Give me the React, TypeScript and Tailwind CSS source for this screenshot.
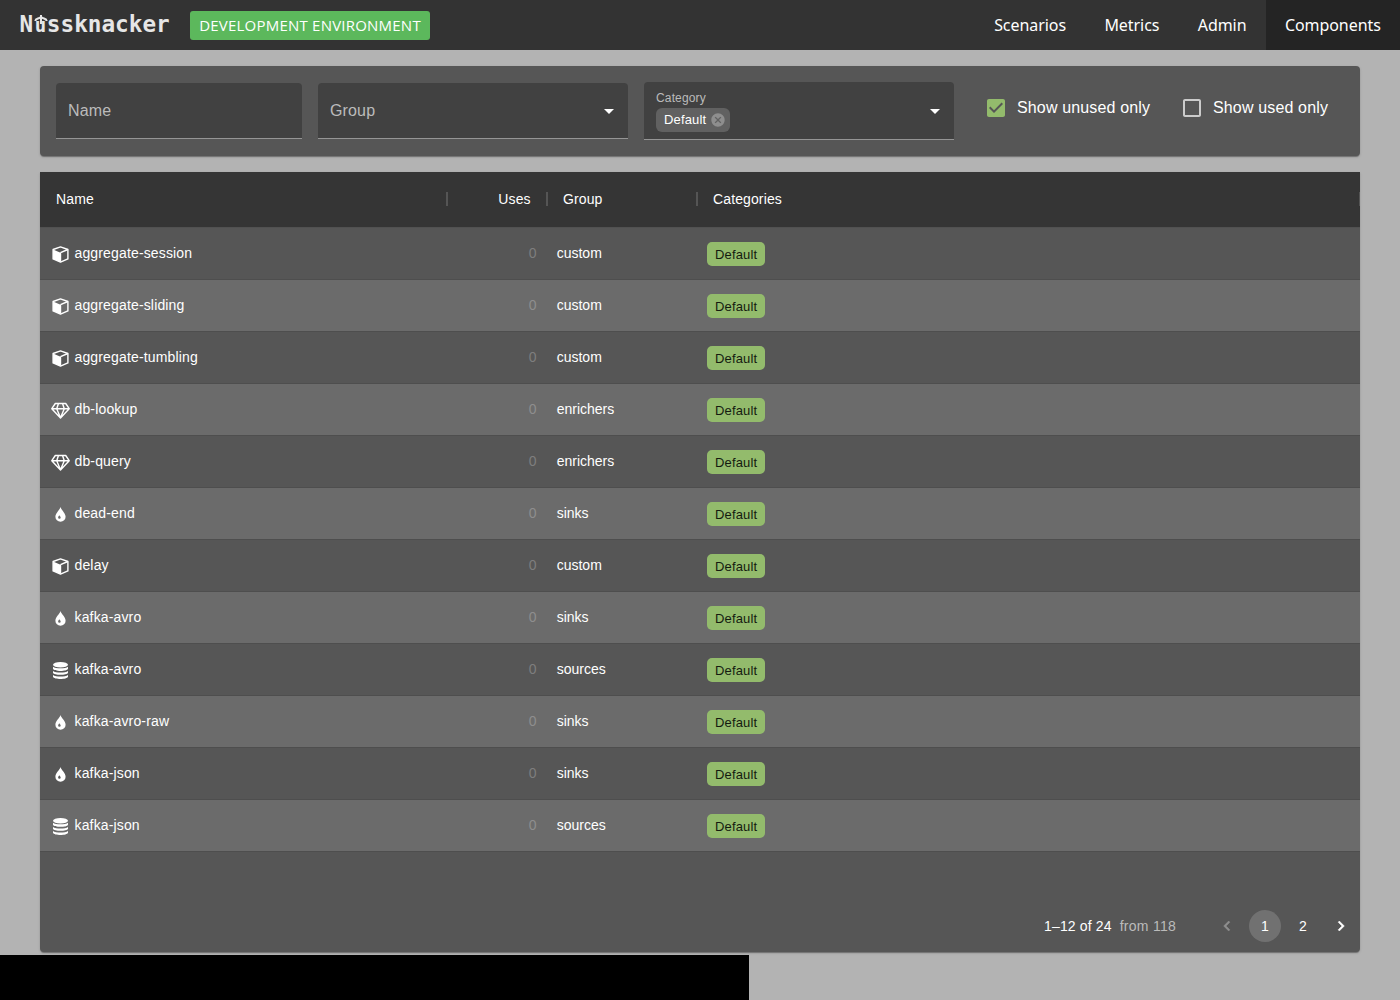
import React from "react";

type Kind = "custom" | "enrichers" | "sinks" | "sources";

const rows: { name: string; group: Kind }[] = [
  { name: "aggregate-session", group: "custom" },
  { name: "aggregate-sliding", group: "custom" },
  { name: "aggregate-tumbling", group: "custom" },
  { name: "db-lookup", group: "enrichers" },
  { name: "db-query", group: "enrichers" },
  { name: "dead-end", group: "sinks" },
  { name: "delay", group: "custom" },
  { name: "kafka-avro", group: "sinks" },
  { name: "kafka-avro", group: "sources" },
  { name: "kafka-avro-raw", group: "sinks" },
  { name: "kafka-json", group: "sinks" },
  { name: "kafka-json", group: "sources" },
];

function KindIcon({ kind }: { kind: Kind }) {
  return (
    <svg width="20" height="20" viewBox="-0.5 -0.5 20 20" className="shrink-0" fill="white">
      {kind === "custom" && (
        <>
          <path d="M10 2.400 17.400 5V14.400L10 17.600 2.600 14.400V5Z" fill="none" stroke="white" strokeWidth="1.400" strokeLinejoin="round" />
          <path d="M2.600 5 10 8.200V17.600L2.600 14.400Z" />
          <path d="M10 8.200 17.400 5M10 8.200V17" fill="none" stroke="white" strokeWidth="1.400" />
        </>
      )}
      {kind === "enrichers" && (
        <path
          d="M4.800 3H15.200L18.700 8.200 10 17.600 1.300 8.200ZM1.300 8.200H18.700M8 3 6.200 8.200 10 17.200 13.800 8.200 12 3"
          fill="none"
          stroke="white"
          strokeWidth="1.400"
          strokeLinejoin="round"
        />
      )}
      {kind === "sinks" && (
        <path
          fillRule="evenodd"
          d="M10 2.600C10.800 5.600 15.100 8.700 15.100 12.200A5.100 5.100 0 0 1 4.900 12.200C4.900 8.700 9.200 5.600 10 2.600ZM8.800 10.800C8.500 11.600 7.600 12.200 7.600 13A1.300 1.300 0 0 0 10.200 13C10.200 12.200 9.100 11.600 8.800 10.800Z"
        />
      )}
      {kind === "sources" && (
        <>
          <ellipse cx="10" cy="4.200" rx="7.500" ry="2.800" />
          <path d="M2.500 6.300C5 8.300 15 8.300 17.500 6.300V8.200C16.500 11.100 3.500 11.100 2.500 8.200Z" />
          <path d="M2.500 10.400C5 12.400 15 12.400 17.500 10.400V12.200C16.500 15 3.500 15 2.500 12.200Z" />
          <path d="M2.500 14.400C5 16.400 15 16.400 17.500 14.400V16.200C16.500 19.200 3.500 19.200 2.500 16.200Z" />
        </>
      )}
    </svg>
  );
}

function Caret() {
  return (
    <svg width="24" height="24" viewBox="0 0 24 24" fill="white" className="shrink-0">
      <path d="m7 10 5 5 5-5z" />
    </svg>
  );
}

function Logo() {
  return (
    <div className="relative -mt-[3px] ml-[19.5px] w-[150px] whitespace-nowrap font-['DejaVu_Sans_Mono',monospace] text-[22.7px] font-bold leading-[30px] text-[#e6e6e6]">
      N<span className="inline-block w-[13.67px] pl-[1.500px] text-[19px] leading-none">u</span>ssknacker
      <svg width="14" height="10" viewBox="0 0 14 10" className="absolute left-[14px] top-[6px]" fill="none" stroke="#e6e6e6">
        <path d="M7 0V9" strokeWidth="2" />
        <path d="M1.300 6C1.500 3 5 4.200 7 1.800C9 4.200 12.500 3 12.700 6" strokeWidth="2" />
      </svg>
    </div>
  );
}

function HeaderCell({ className, label }: { className: string; label: string }) {
  return (
    <div className={"flex h-full items-center " + className}>
      <span className="flex-1 pl-4 pr-[15.3px]">{label}</span>
      <span className="-mr-px mb-[2px] h-[14px] w-[2px] bg-[#555555]" />
    </div>
  );
}

export default function App() {
  return (
    <div className="flex h-[1000px] w-[1400px] flex-col overflow-hidden bg-[#b3b3b3] font-['Liberation_Sans',Arial,sans-serif] text-white">
      <header className="flex h-[50px] shrink-0 items-center bg-[#333333] font-['Noto_Sans',sans-serif]">
        <Logo />
        <div className="ml-[20.5px] mt-px flex h-[29px] w-[240px] items-center justify-center whitespace-nowrap rounded-[3px] bg-[#5cb85c] font-['Open_Sans',sans-serif] text-[15px] tracking-[0.22px]">
          DEVELOPMENT ENVIRONMENT
        </div>
        <nav className="ml-auto flex h-full text-[16px] tracking-[-0.06px]">
          <a className="flex items-center px-[19.2px]">Scenarios</a>
          <a className="flex items-center px-[19.2px]">Metrics</a>
          <a className="flex items-center px-[19.2px]">Admin</a>
          <a className="flex items-center bg-[#242424] px-[19.2px]">Components</a>
        </nav>
      </header>

      <main className="flex h-[905px] shrink-0 flex-col px-10 pt-4">
        <section className="flex h-[90px] items-center gap-4 rounded bg-[#565656] px-4 tracking-[0.15px] shadow-[0_2px_1px_-1px_rgba(0,0,0,0.2),0_1px_1px_rgba(0,0,0,0.14),0_1px_3px_rgba(0,0,0,0.12)]">
          <div className="flex h-14 w-[246px] items-center rounded-t border-b border-[#959595] bg-[#414141] px-3 text-base text-[#bbbbbb]">
            Name
          </div>
          <div className="flex h-14 w-[310px] items-center justify-between rounded-t border-b border-[#959595] bg-[#414141] pl-3 pr-[7px] text-base text-[#bbbbbb]">
            Group
            <Caret />
          </div>
          <div className="flex h-[58px] w-[310px] items-center justify-between rounded-t border-b border-[#959595] bg-[#414141] pl-3 pr-[7px]">
            <div className="flex h-full flex-col pt-2">
              <span className="h-[18px] text-[12px] leading-[17px] text-[#bbbbbb]">Category</span>
              <span className="flex h-6 w-[74px] items-center justify-between rounded-md bg-[#616161] pl-2 pr-1 text-[13px]">
                Default
                <svg width="16" height="16" viewBox="0 0 24 24" fill="#8e8e8e">
                  <path d="M12 2C6.47 2 2 6.47 2 12s4.47 10 10 10 10-4.470 10-10S17.530 2 12 2zm5 13.590L15.590 17 12 13.410 8.410 17 7 15.590 10.590 12 7 8.410 8.410 7 12 10.590 15.590 7 17 8.410 13.410 12 17 15.590z" />
                </svg>
              </span>
            </div>
            <Caret />
          </div>
          <div className="mb-[6px] ml-[14px] flex items-center">
            <label className="flex items-center gap-[9px]">
              <svg width="24" height="24" viewBox="0 0 24 24" fill="#93bb6c">
                <path d="M19 3H5c-1.110 0-2 .9-2 2v14c0 1.100.890 2 2 2h14c1.110 0 2-.9 2-2V5c0-1.100-.890-2-2-2zm-9 14l-5-5 1.410-1.410L10 14.170l7.590-7.590L19 8l-9 9z" />
              </svg>
              <span className="w-[133px] whitespace-nowrap text-base">Show unused only</span>
            </label>
            <label className="ml-[30px] flex items-center gap-[9px]">
              <svg width="24" height="24" viewBox="0 0 24 24" fill="#cccccc">
                <path d="M19 5v14H5V5h14m0-2H5c-1.100 0-2 .9-2 2v14c0 1.100.9 2 2 2h14c1.100 0 2-.9 2-2V5c0-1.100-.9-2-2-2z" />
              </svg>
              <span className="whitespace-nowrap text-base">Show used only</span>
            </label>
          </div>
        </section>

        <section className="mt-4 flex h-[780px] flex-col overflow-hidden rounded-b bg-[#565656] text-[14px] shadow-[0_2px_1px_-1px_rgba(0,0,0,0.2),0_1px_1px_rgba(0,0,0,0.14),0_1px_3px_rgba(0,0,0,0.12)]">
          <div className="flex h-14 shrink-0 border-b border-[#515151] bg-[#353535] tracking-[0.12px]">
            <HeaderCell className="w-[407px]" label="Name" />
            <HeaderCell className="w-[100px] text-right" label="Uses" />
            <HeaderCell className="w-[150px]" label="Group" />
            <HeaderCell className="flex-1" label="Categories" />
          </div>
          {rows.map((row, i) => (
            <div
              key={i}
              className={"flex h-[52px] shrink-0 items-center border-b border-[#4e4e4e] " + (i % 2 ? "bg-[#6b6b6b]" : "bg-[#565656]")}
            >
              <div className="flex w-[407px] items-center pl-[10px]">
                <div className="mt-px">
                  <KindIcon kind={row.group} />
                </div>
                <span className="ml-[4.5px] tracking-[0.15px]">{row.name}</span>
              </div>
              <div className={"w-[100px] pr-[10.4px] text-right " + (i % 2 ? "text-[#8e8e8e]" : "text-[#7e7e7e]")}>0</div>
              <div className="w-[150px] pl-[9.7px]">{row.group}</div>
              <div className="flex pl-[10px]">
                <span className="flex h-6 items-center rounded-[5px] bg-[#93bb6c] px-2 pt-[2px] text-[13px] tracking-[0.14px] text-[#151b10]">
                  Default
                </span>
              </div>
            </div>
          ))}
          <footer className="mt-auto flex h-[52px] shrink-0 items-center justify-end pr-[3px]">
            <span className="tracking-[0.15px]">1–12 of 24</span>
            <span className="ml-2 tracking-[0.26px] text-[#bbbbbb]">from 118</span>
            <div className="ml-[35px] flex items-center gap-[6px]">
              <span className="flex size-8 items-center justify-center">
                <svg width="20" height="20" viewBox="0 0 24 24" fill="#8e8e8e" stroke="#8e8e8e" strokeWidth="0.6">
                  <path d="M15.410 7.410L14 6l-6 6 6 6 1.410-1.410L10.830 12z" />
                </svg>
              </span>
              <span className="flex size-8 items-center justify-center rounded-full bg-[#717171]">1</span>
              <span className="flex size-8 items-center justify-center">2</span>
              <span className="flex size-8 items-center justify-center">
                <svg width="20" height="20" viewBox="0 0 24 24" fill="white" stroke="white" strokeWidth="0.6">
                  <path d="M10 6L8.590 7.410 13.170 12l-4.580 4.590L10 18l6-6z" />
                </svg>
              </span>
            </div>
          </footer>
        </section>
      </main>
      <div className="h-[45px] w-[749px] shrink-0 bg-black" />
    </div>
  );
}
